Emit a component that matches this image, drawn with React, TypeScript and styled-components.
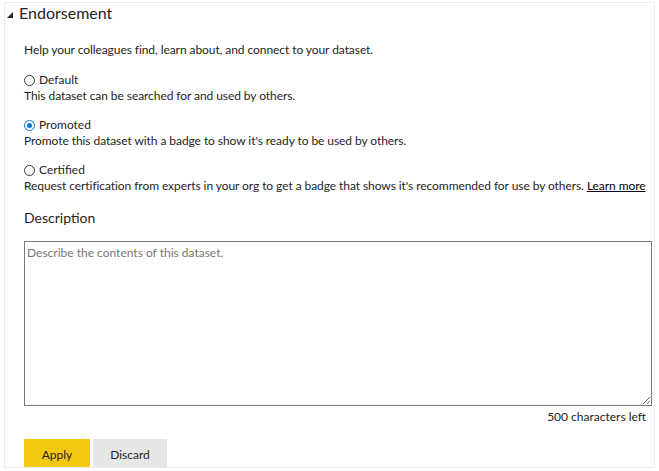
import React, { useState } from "react";
import styled, { createGlobalStyle } from "styled-components";

const FONT = `"Segoe UI", Lato, "Open Sans", sans-serif`;

const Global = createGlobalStyle`
  html, body { margin: 0; padding: 0; background: #ffffff; }
  body { font-family: ${FONT}; color: #252423; }
  * { box-sizing: border-box; }
`;

const Panel = styled.section`
  margin: 2px 0 0 4px;
  width: 651px;
  height: 466px;
  border: 1px solid #ececec;
  overflow: hidden;
  display: flex;
  flex-direction: column;
`;

const Header = styled.div`
  display: flex;
  align-items: center;
  height: 20px;
  padding-left: 3px;
  gap: 6px;
`;

const HeaderTitle = styled.span`
  font-size: 16px;
  line-height: 20px;
  color: #252423;
`;

const Content = styled.div`
  display: flex;
  flex-direction: column;
  padding: 19px 2px 0 19px;
`;

const Text = styled.div`
  font-size: 12px;
  line-height: 16px;
  color: #252423;
  white-space: nowrap;
  letter-spacing: -0.07px;
`;

const Options = styled.div`
  display: flex;
  flex-direction: column;
  gap: 13px;
  margin-top: 14px;
`;

const Option = styled.div`
  display: flex;
  flex-direction: column;
`;

const RadioRow = styled.label`
  display: flex;
  align-items: center;
  gap: 4px;
  font-size: 12px;
  line-height: 16px;
  cursor: pointer;
`;

const RadioCircle = styled.span<{ $checked: boolean }>`
  width: 11px;
  height: 11px;
  border-radius: 50%;
  border: 1px solid ${(p) => (p.$checked ? "#0078d4" : "#333333")};
  display: flex;
  align-items: center;
  justify-content: center;
  background: #fff;
  &::after {
    content: "";
    width: 5px;
    height: 5px;
    border-radius: 50%;
    background: ${(p) => (p.$checked ? "#0078d4" : "transparent")};
  }
`;

const Link = styled.a`
  color: #000000;
  text-decoration: underline;
  cursor: pointer;
`;

const SectionLabel = styled.div`
  font-size: 14px;
  line-height: 20px;
  margin-top: 14px;
  color: #252423;
`;

const TextArea = styled.textarea`
  margin-top: 13px;
  width: 628px;
  height: 165px;
  border: 1px solid #7a7a7a;
  border-radius: 0;
  padding: 3px 2px;
  font-family: ${FONT};
  font-size: 12px;
  line-height: 16px;
  color: #252423;
  resize: both;
  outline: none;
  &::placeholder { color: #767676; }
`;

const Counter = styled.div`
  margin-top: 3px;
  width: 622px;
  text-align: right;
  font-size: 12px;
  line-height: 16px;
  color: #252423;
`;

const Buttons = styled.div`
  display: flex;
  gap: 3px;
  margin-top: 14px;
`;

const Button = styled.button<{ $primary?: boolean }>`
  height: 32px;
  width: ${(p) => (p.$primary ? "66px" : "74px")};
  border: none;
  border-radius: 0;
  background: ${(p) => (p.$primary ? "#f2c811" : "#e6e6e6")};
  color: #252423;
  font-family: ${FONT};
  font-size: 12px;
  line-height: 16px;
  display: flex;
  align-items: flex-start;
  justify-content: center;
  padding: 8px 0 0 0;
  cursor: pointer;
`;

const options = [
  { id: "default", label: "Default", desc: "This dataset can be searched for and used by others." },
  { id: "promoted", label: "Promoted", desc: "Promote this dataset with a badge to show it's ready to be used by others." },
  { id: "certified", label: "Certified", desc: "Request certification from experts in your org to get a badge that shows it's recommended for use by others." },
];

export default function App() {
  const [value, setValue] = useState("promoted");
  return (
    <>
      <Global />
      <Panel>
        <Header>
          <svg width="6" height="6" viewBox="0 0 6 6" style={{ marginTop: 4, marginLeft: -1 }}>
            <polygon points="6,0 6,6 0,6" fill="#252423" />
          </svg>
          <HeaderTitle>Endorsement</HeaderTitle>
        </Header>
        <Content>
          <Text>Help your colleagues find, learn about, and connect to your dataset.</Text>
          <Options>
            {options.map((o) => (
              <Option key={o.id}>
                <RadioRow onClick={() => setValue(o.id)}>
                  <RadioCircle $checked={value === o.id} />
                  {o.label}
                </RadioRow>
                <Text>
                  {o.desc}
                  {o.id === "certified" && (
                    <>
                      {" "}
                      <Link>Learn more</Link>
                    </>
                  )}
                </Text>
              </Option>
            ))}
          </Options>
          <SectionLabel>Description</SectionLabel>
          <TextArea placeholder="Describe the contents of this dataset." />
          <Counter>500 characters left</Counter>
          <Buttons>
            <Button $primary>Apply</Button>
            <Button>Discard</Button>
          </Buttons>
        </Content>
      </Panel>
    </>
  );
}
